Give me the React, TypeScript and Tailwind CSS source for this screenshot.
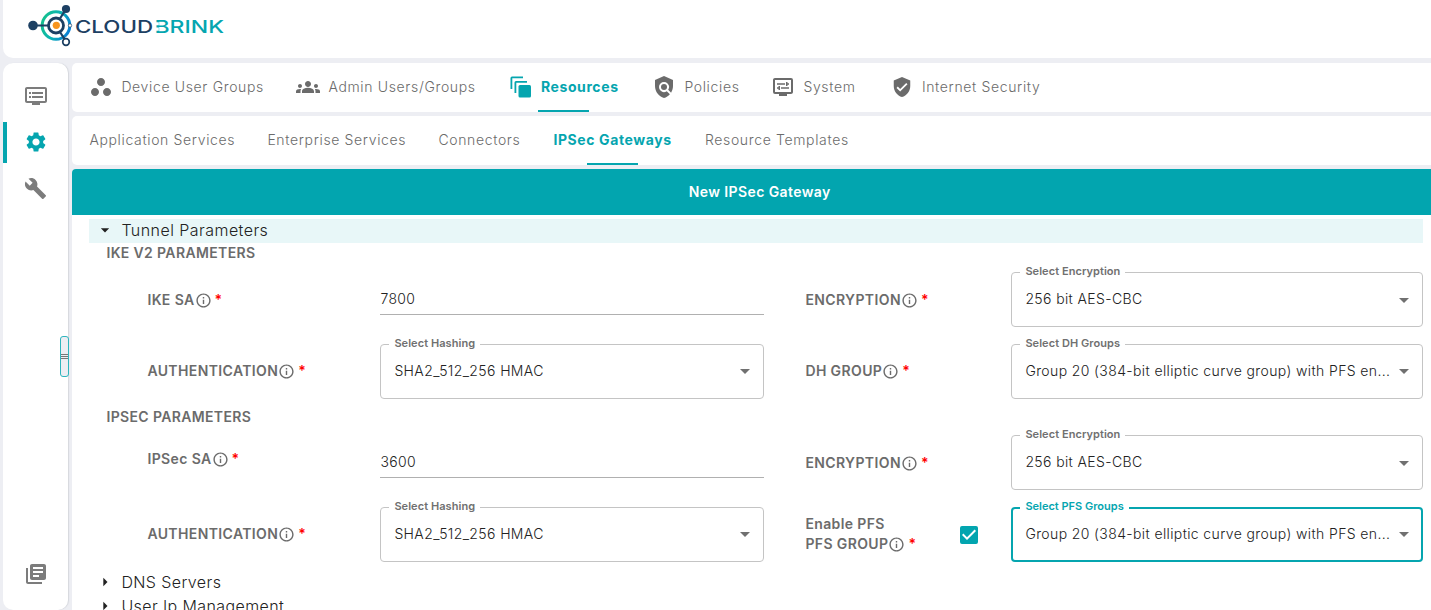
import React from "react";
import {
  MdDvr,
  MdSettings,
  MdBuild,
  MdLibraryBooks,
  MdWorkspaces,
  MdGroups,
  MdPolicy,
  MdDisplaySettings,
  MdVerifiedUser,
  MdInfoOutline,
  MdArrowDropDown,
  MdArrowRight,
  MdCheckBox,
} from "react-icons/md";

function Logo() {
  return (
    <svg className="block" width="204" height="48" viewBox="24 0 204 48">
      <defs>
        <linearGradient id="ring" x1="0" y1="0.3" x2="1" y2="0.7">
          <stop offset="0" stopColor="#14c08f" />
          <stop offset="0.5" stopColor="#0cb3b5" />
          <stop offset="1" stopColor="#0a7fd6" />
        </linearGradient>
      </defs>
      <circle cx="56" cy="25.5" r="13.8" fill="none" stroke="url(#ring)" strokeWidth="3" />
      <g stroke="#1d4063" strokeWidth="2.2">
        <path d="M33 25.5H49M60 18.5L66 9M60 32L64.5 39" fill="none" />
        <circle cx="56" cy="25.5" r="7.5" fill="#fff" strokeWidth="2.8" />
        <circle cx="66" cy="42" r="3.3" fill="#fff" strokeWidth="1.7" />
      </g>
      <circle cx="33" cy="25.5" r="4.8" fill="#1d4063" />
      <circle cx="66" cy="9" r="4.1" fill="#1d4063" />
      <circle cx="56.3" cy="25.3" r="3.6" fill="#f7941e" />
      <circle cx="70" cy="25.5" r="1.7" fill="#fff" stroke="#1d4063" strokeWidth="0.7" />
      <g fontFamily="Inter, sans-serif" fontSize="17.5" fontWeight="500">
        <text x="75" y="32.8" textLength="78" lengthAdjust="spacingAndGlyphs" fill="#1d4063">CLOUD</text>
        <text x="154.5" y="32.8" textLength="69.5" lengthAdjust="spacingAndGlyphs" fill="#05a6b0">BRINK</text>
      </g>
      <path d="M154 22.2H158.8V25.2H154zM154 27.4H158.8V30.7H154z" fill="#fff" />
    </svg>
  );
}

function StackIcon() {
  return (
    <svg className="shrink-0" width="22" height="22" viewBox="0 0 22 22" fill="#05a5af">
      <rect x="8.5" y="9" width="12.5" height="12.5" rx="1.5" />
      <path d="M4.500 17V6.500a1.500 1.500 0 0 1 1.500-1.500H17v1.800H6.300V17zM.5 13V2A1.500 1.500 0 0 1 2 .5H13V2.300H2.300V13z" />
    </svg>
  );
}

function Label({ text, className = "" }: { text: string; className?: string }) {
  return (
    <div className={`flex h-5 items-center text-[14px] font-semibold tracking-[0.38px] text-[#6b6b6b] ${className}`}>
      <span>{text}</span>
      <MdInfoOutline className="mt-[2px] size-[17px] shrink-0" />
      <span className="ml-[3px] text-[#ff0000]">*</span>
    </div>
  );
}

function Select({ label, value, active = false }: { label: string; value: string; active?: boolean }) {
  return (
    <div
      className={`relative flex h-[55px] items-center rounded-[4px] ${
        active ? "border-2 border-[#05a5af] pr-[5px] pl-[12px]" : "border border-[#c4c4c4] pr-[6px] pl-[13px]"
      }`}
    >
      <span
        className={`absolute bg-white px-[5px] text-[11px] leading-[12px] font-semibold whitespace-nowrap ${
          active ? "-top-[9px] left-[7px] text-[#05a5af]" : "-top-[8px] left-[8px] tracking-[0.06px] text-[#707070]"
        }`}
      >
        {label}
      </span>
      <span className="-mt-[2px] min-w-0 flex-1 text-[14px] font-light tracking-[0.38px] whitespace-nowrap text-[#222]">
        {value}
      </span>
      <MdArrowDropDown className="size-6 shrink-0 text-[#707070]" />
    </div>
  );
}

function TextField({ value }: { value: string }) {
  return (
    <div className="flex h-[31px] items-center border-b border-[#b0b0b0] pb-[2px] text-[14px] font-light tracking-[0.38px] text-[#222]">
      {value}
    </div>
  );
}

export default function App() {
  return (
    <div className="flex h-[610px] w-[1431px] flex-col overflow-hidden bg-[#edeef3] pl-[3px] font-['Inter',sans-serif] text-[#6b6b6b]">
      <header className="h-[58px] shrink-0 rounded-bl-[10px] bg-white pl-[21px]">
        <Logo />
      </header>
      <div className="mt-[5px] flex min-h-0 flex-1">
        <aside className="relative flex w-[65px] shrink-0 flex-col items-center rounded-[10px] bg-white shadow-[1px_0_1px_#d5d7dd]">
          <MdDvr className="mt-[21px] size-6 text-[#7c7c7c]" />
          <div className="mt-[14px] flex h-[41px] w-full items-center justify-center border-l-4 border-[#05a5af] pr-[3px] pb-px">
            <MdSettings className="size-6 text-[#05a5af]" />
          </div>
          <MdBuild className="mt-[14px] size-[23px] text-[#7c7c7c]" />
          <MdLibraryBooks className="mt-auto mb-[24px] size-6 text-[#7c7c7c]" />
          <div className="absolute top-[273px] -right-px flex h-[41px] w-[9px] flex-col items-center justify-center gap-px rounded-[3px] border border-[#2fb5bd] bg-[#edeef3]">
            <span className="h-px w-full bg-[#777]" />
            <span className="h-px w-full bg-[#777]" />
            <span className="h-px w-full bg-[#777]" />
          </div>
        </aside>
        <main className="ml-[4.4px] flex min-w-0 flex-1 flex-col">
          <nav className="flex h-[49px] shrink-0 items-center rounded-l-[5px] bg-white pb-[2px] pl-[17px] text-[14px] font-light tracking-[0.65px] whitespace-nowrap">
            <div className="flex w-[207px] items-center gap-2">
              <MdWorkspaces className="size-6" />
              <span>Device User Groups</span>
            </div>
            <div className="flex w-[213.5px] items-center gap-2">
              <MdGroups className="size-6" />
              <span>Admin Users/Groups</span>
            </div>
            <div className="relative flex h-full w-[142.5px] items-center gap-[9px] font-bold tracking-[0.6px] text-[#05a5af]">
              <StackIcon />
              <span>Resources</span>
              <span className="absolute -bottom-[2px] left-[28px] h-[2px] w-[51px] bg-[#05a5af]" />
            </div>
            <div className="flex w-[119px] items-center gap-2">
              <MdPolicy className="size-6" />
              <span>Policies</span>
            </div>
            <div className="flex w-[119.5px] items-center gap-2">
              <MdDisplaySettings className="size-6" />
              <span>System</span>
            </div>
            <div className="flex items-center gap-[9px]">
              <MdVerifiedUser className="size-[22px]" />
              <span>Internet Security</span>
            </div>
          </nav>
          <nav className="mt-1 flex h-[49px] shrink-0 items-center rounded-l-[5px] bg-white pb-[2px] pl-[17px] text-[14px] font-light tracking-[0.65px] whitespace-nowrap">
            <span className="w-[178px]">Application Services</span>
            <span className="w-[171px]">Enterprise Services</span>
            <span className="w-[115px]">Connectors</span>
            <div className="relative flex h-full w-[151.5px] items-center font-bold tracking-[0.6px] text-[#05a5af]">
              IPSec Gateways
              <span className="absolute -bottom-[2px] left-[34px] h-[2px] w-[51px] bg-[#05a5af]" />
            </div>
            <span>Resource Templates</span>
          </nav>
          <section className="mt-[3.5px] flex min-h-0 flex-1 flex-col overflow-hidden rounded-tl-[4px] bg-white">
            <h1 className="flex h-[46px] shrink-0 items-center justify-center bg-[#02a5af] pl-[16px] text-[14px] font-semibold tracking-[0.4px] text-white">
              New IPSec Gateway
            </h1>
            <div className="mt-[4px] mr-2 ml-[17px] flex h-[24.5px] shrink-0 items-center bg-[#e8f7f8] pb-px text-[16px] font-light tracking-[0.45px] text-[#222]">
              <MdArrowDropDown className="mx-[6px] size-5 text-[#222]" />
              Tunnel Parameters
            </div>
            <h2 className="ml-[34px] h-5 shrink-0 text-[14px] leading-5 font-semibold tracking-[0.36px]">IKE V2 PARAMETERS</h2>
            <div className="mt-[9px] mr-[8px] ml-[75px] grid shrink-0 grid-cols-[233px_384px_41px_206px_1fr] gap-y-[16.5px]">
              <Label text="IKE SA" className="mt-[17px]" />
              <div className="pt-[12px]"><TextField value="7800" /></div>
              <Label text="ENCRYPTION" className="col-start-4 mt-[17px]" />
              <Select label="Select Encryption" value="256 bit AES-CBC" />
              <Label text="AUTHENTICATION" className="mt-[17px]" />
              <Select label="Select Hashing" value="SHA2_512_256 HMAC" />
              <Label text="DH GROUP" className="col-start-4 mt-[17px]" />
              <Select label="Select DH Groups" value="Group 20 (384-bit elliptic curve group) with PFS en..." />
            </div>
            <h2 className="mt-[8px] ml-[34px] h-5 shrink-0 text-[14px] leading-5 font-semibold tracking-[0.36px]">IPSEC PARAMETERS</h2>
            <div className="mt-[8.5px] mr-[8px] ml-[75px] grid shrink-0 grid-cols-[233px_384px_41px_206px_1fr] gap-y-[16.5px]">
              <Label text="IPSec SA" className="mt-[13px]" />
              <div className="pt-[12px]"><TextField value="3600" /></div>
              <Label text="ENCRYPTION" className="col-start-4 mt-[17px]" />
              <Select label="Select Encryption" value="256 bit AES-CBC" />
              <Label text="AUTHENTICATION" className="mt-[17px]" />
              <Select label="Select Hashing" value="SHA2_512_256 HMAC" />
              <div className="col-start-4 flex items-start justify-between pr-[30px]">
                <div className="mt-[7px] text-[14px] font-semibold tracking-[0.38px]">
                  <div className="h-5 leading-5">Enable PFS</div>
                  <Label text="PFS GROUP" />
                </div>
                <MdCheckBox className="mt-[16px] size-6 text-[#02a5af]" />
              </div>
              <Select active label="Select PFS Groups" value="Group 20 (384-bit elliptic curve group) with PFS en..." />
            </div>
            <div className="mt-[8px] ml-[17px] flex h-[24.5px] shrink-0 items-center text-[16px] font-light tracking-[0.4px] text-[#222]">
              <MdArrowRight className="mx-[6px] size-5 text-[#222]" />
              DNS Servers
            </div>
            <div className="ml-[17px] flex h-[24px] shrink-0 items-center text-[16px] font-light tracking-[0.4px] text-[#222]">
              <MdArrowRight className="mx-[6px] size-5 text-[#222]" />
              User Ip Management
            </div>
          </section>
        </main>
      </div>
    </div>
  );
}
